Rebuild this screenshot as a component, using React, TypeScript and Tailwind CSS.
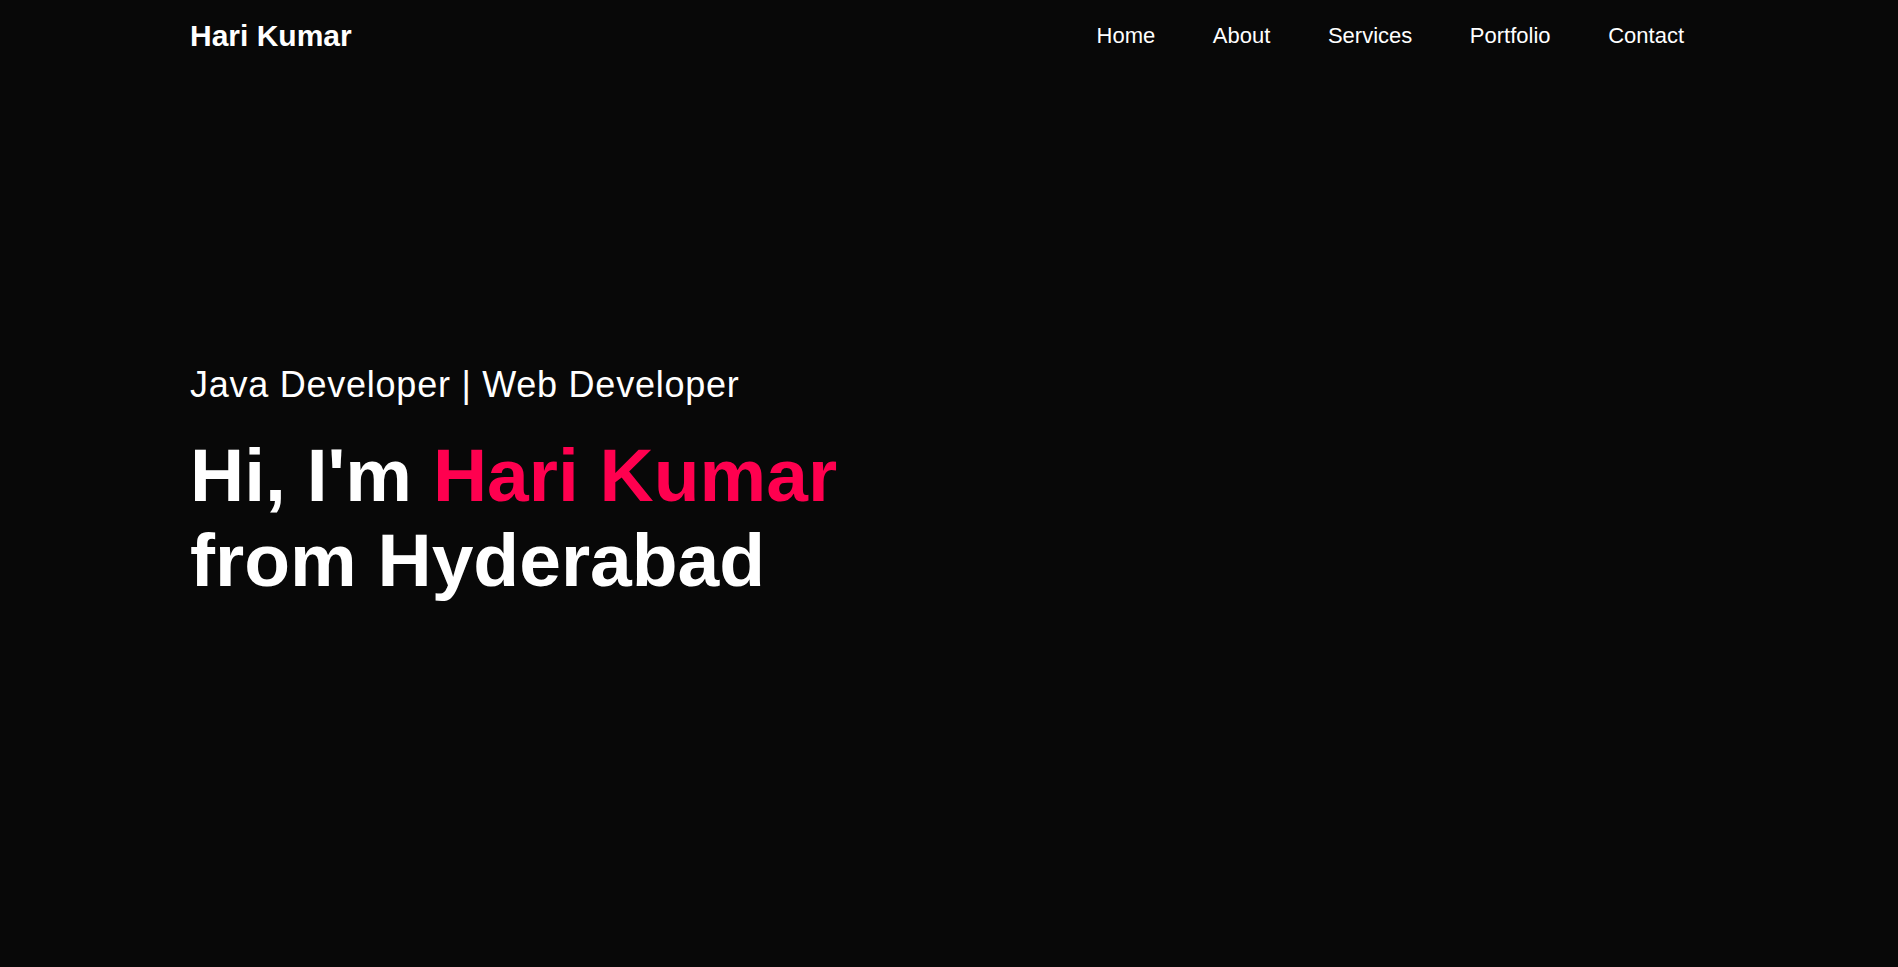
import React from 'react';

const links = ['Home', 'About', 'Services', 'Portfolio', 'Contact'];

function App() {
  return (
    <div className="h-screen flex flex-col bg-[#080808] text-white font-['Liberation_Sans',Arial,sans-serif]">
      <header className="h-[70px] flex items-center justify-between pl-[190px] pr-[214px]">
        <a href="#" className="text-[30px] font-bold">Hari Kumar</a>
        <nav>
          <ul className="flex items-center gap-[57.6px] text-[22px]">
            {links.map((l) => (
              <li key={l}>
                <a href="#">{l}</a>
              </li>
            ))}
          </ul>
        </nav>
      </header>

      <section className="flex-1 flex flex-col justify-center pl-[190px] pb-[70px]">
        <p className="text-[36px] leading-[41px] tracking-[0.75px]">Java Developer | Web Developer</p>
        <h1 className="mt-[28px] text-[75px] leading-[85px] font-bold">
          Hi, I'm <span className="text-[#ff004f]">Hari Kumar</span>
          <br />
          from Hyderabad
        </h1>
      </section>
    </div>
  );
}

export default App;
